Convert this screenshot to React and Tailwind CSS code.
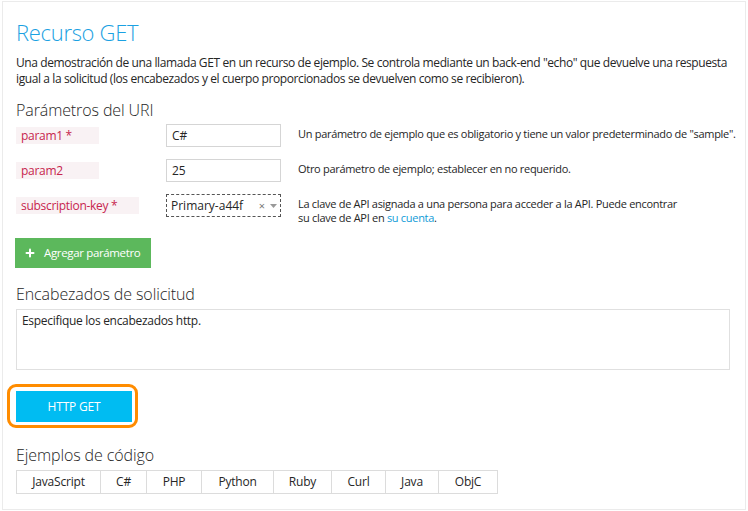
import { Plus } from "lucide-react";

const params = [
  {
    name: "param1 *",
    labelWidth: "w-[83px]",
    value: "C#",
    desc: 'Un parámetro de ejemplo que es obligatorio y tiene un valor predeterminado de "sample".',
  },
  {
    name: "param2",
    labelWidth: "w-[83px]",
    value: "25",
    desc: "Otro parámetro de ejemplo; establecer en no requerido.",
  },
];

const tabs = [
  { label: "JavaScript", width: "w-[84px]" },
  { label: "C#", width: "w-[46px]" },
  { label: "PHP", width: "w-[55px]" },
  { label: "Python", width: "w-[72px]" },
  { label: "Ruby", width: "w-[58px]" },
  { label: "Curl", width: "w-[54px]" },
  { label: "Java", width: "w-[53px]" },
  { label: "ObjC", width: "w-[58px]" },
];

const ParamLabel = ({ name, width }) => (
  <div className="w-[150px] flex-shrink-0 flex items-center h-[23px]">
    <span
      className={`${width} h-[17px] bg-[#f9f2f4] text-[#c7254e] text-[12px] leading-[17px] pl-[5px] tracking-[-0.3px]`}
    >
      {name}
    </span>
  </div>
);

export default function App() {
  return (
    <div className="pl-[2px] pt-px font-['Open_Sans',sans-serif] text-[#262626]">
      <div className="w-[744px] h-[509px] border border-[#ebebeb] bg-white pl-[13px] pr-[2px]">
        <h1 className="mt-[14px] text-[22px] leading-[32px] font-light text-[#1ba1e2] tracking-[-0.3px]">
          Recurso GET
        </h1>

        <p className="mt-[7px] text-[12px] leading-[16px] tracking-[-0.4px]">
          <span className="whitespace-nowrap">
            Una demostración de una llamada GET en un recurso de ejemplo. Se
            controla mediante un back-end "echo" que devuelve una respuesta
          </span>
          <br />
          igual a la solicitud (los encabezados y el cuerpo proporcionados se
          devuelven como se recibieron).
        </p>

        <h2 className="mt-[12px] text-[16px] leading-[22px] font-light tracking-[-0.1px]">
          Parámetros del URI
        </h2>

        <div className="mt-[3px] flex flex-col gap-[12px]">
          {params.map((p) => (
            <div key={p.name} className="flex items-start">
              <ParamLabel name={p.name} width={p.labelWidth} />
              <div className="w-[115px] h-[23px] flex-shrink-0 border border-[#d5d5d5] px-[5px] text-[12px] leading-[21px]">
                {p.value}
              </div>
              <p className="ml-[17px] pt-[3px] text-[11px] leading-[14px] tracking-[-0.3px] whitespace-nowrap">
                {p.desc}
              </p>
            </div>
          ))}

          <div className="flex items-start">
            <ParamLabel name="subscription-key *" width="w-[123px]" />
            <div className="w-[115px] h-[23px] flex-shrink-0 border border-dashed border-[#555] pl-[4px] pr-[3px] flex items-center text-[12px]">
              <span className="flex-1">Primary-a44f</span>
              <span className="text-[11px] text-[#777] mr-[5px] leading-none">×</span>
              <svg width="7" height="4" viewBox="0 0 7 4" className="mt-px">
                <path d="M0 0h7L3.5 4z" fill="#999" />
              </svg>
            </div>
            <p className="ml-[17px] pt-[3px] text-[11px] leading-[14px] tracking-[-0.3px]">
              La clave de API asignada a una persona para acceder a la API.
              Puede encontrar
              <br />
              su clave de API en{" "}
              <a href="#" className="text-[#0f9bd7]">
                su cuenta
              </a>
              .
            </p>
          </div>
        </div>

        <button className="mt-[13px] ml-[-1px] h-[30px] bg-[#5cb85c] text-white flex items-center pl-[9px] pr-[11px] text-[11.5px] tracking-[-0.35px]">
          <Plus size={12} strokeWidth={4} className="mr-[8px]" />
          Agregar parámetro
        </button>

        <h2 className="mt-[15px] text-[16px] leading-[22px] font-light tracking-[-0.1px]">
          Encabezados de solicitud
        </h2>

        <textarea
          className="mt-[4px] block w-[714px] h-[61px] border border-[#e0e0e0] px-[5px] pt-[3px] text-[12px] leading-[15px] tracking-[-0.3px] resize-none outline-none placeholder:text-[#262626]"
          placeholder="Especifique los encabezados http."
        />

        <div className="mt-[14px] ml-[-9px] w-fit border-[3px] border-[#ff8c00] rounded-[9px] pl-[6px] pr-[3px] pt-[4px] pb-[3px]">
          <button className="w-[116px] h-[31px] bg-[#00bcf2] text-white text-[12px] tracking-[-0.2px] flex items-center justify-center">
            HTTP GET
          </button>
        </div>

        <h2 className="mt-[16px] text-[16px] leading-[22px] font-light tracking-[-0.1px]">
          Ejemplos de código
        </h2>

        <div className="mt-[4px] flex w-fit border border-[#dcdcdc]">
          {tabs.map((t, i) => (
            <div
              key={t.label}
              className={`${t.width} h-[22px] flex items-center justify-center text-[12px] tracking-[-0.2px] ${
                i < tabs.length - 1 ? "border-r border-[#dcdcdc]" : ""
              }`}
            >
              {t.label}
            </div>
          ))}
        </div>
      </div>
    </div>
  );
}
